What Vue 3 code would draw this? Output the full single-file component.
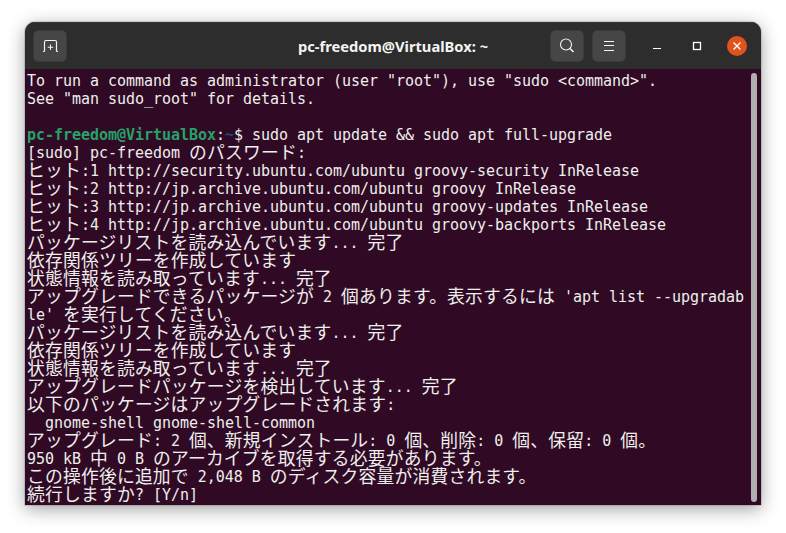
<script setup>
const plain = [
  'To run a command as administrator (user "root"), use "sudo <command>".',
  'See "man sudo_root" for details.',
  '',
  null,
  '[sudo] pc-freedom のパスワード:',
  'ヒット:1 http://security.ubuntu.com/ubuntu groovy-security InRelease',
  'ヒット:2 http://jp.archive.ubuntu.com/ubuntu groovy InRelease',
  'ヒット:3 http://jp.archive.ubuntu.com/ubuntu groovy-updates InRelease',
  'ヒット:4 http://jp.archive.ubuntu.com/ubuntu groovy-backports InRelease',
  'パッケージリストを読み込んでいます... 完了',
  '依存関係ツリーを作成しています',
  '状態情報を読み取っています... 完了',
  "アップグレードできるパッケージが 2 個あります。表示するには 'apt list --upgradab",
  "le' を実行してください。",
  'パッケージリストを読み込んでいます... 完了',
  '依存関係ツリーを作成しています',
  '状態情報を読み取っています... 完了',
  'アップグレードパッケージを検出しています... 完了',
  '以下のパッケージはアップグレードされます:',
  '  gnome-shell gnome-shell-common',
  'アップグレード: 2 個、新規インストール: 0 個、削除: 0 個、保留: 0 個。',
  '950 kB 中 0 B のアーカイブを取得する必要があります。',
  'この操作後に追加で 2,048 B のディスク容量が消費されます。',
  '続行しますか? [Y/n]'
]

const prompt = [
  { text: 'pc-freedom@VirtualBox', cls: 'green' },
  { text: ':', cls: '' },
  { text: '~', cls: 'blue' },
  { text: '$ sudo apt update && sudo apt full-upgrade', cls: '' }
]

function runs(line) {
  return line
    .split(/([\u3000-\u9fff\uff00-\uffef]+)/)
    .filter(Boolean)
    .map((text) => ({ text, cls: /^[\u3000-\u9fff\uff00-\uffef]/.test(text) ? 'cjk' : '' }))
}

const lines = plain.map((line) => (line === null ? prompt : runs(line)))
</script>

<template>
  <div class="page">
    <div class="window">
      <header class="bar">
        <div class="side">
          <button class="btn first">
            <svg width="16" height="16" viewBox="0 0 16 16" fill="none" stroke="#f4f4f2" stroke-width="1.2">
              <path d="M2.5 13.5V4q0-1.500 1.500-1.500h9q1.500 0 1.500 1.500V13.500M1 13.500h1.500M14.500 13.500H16" />
              <path d="M8.500 6.500v5.500M5.750 9.250h5.500" stroke-width="1" />
            </svg>
          </button>
        </div>
        <div class="title">pc-freedom@VirtualBox: ~</div>
        <div class="side end">
          <div class="actions">
            <button class="btn">
              <svg width="16" height="16" viewBox="0 0 16 16" fill="none" stroke="#f4f4f2">
                <circle cx="7" cy="6.500" r="5.500" stroke-width="1.100" />
                <path d="M11 10.500l3.500 3.500" stroke-width="1.600" />
              </svg>
            </button>
            <button class="btn">
              <svg width="16" height="16" viewBox="0 0 16 16" fill="none" stroke="#f4f4f2" stroke-width="1">
                <path d="M3 3.500h10M3 7.500h10M3 12.500h10" />
              </svg>
            </button>
          </div>
          <div class="controls">
            <span class="ctl">
              <svg width="16" height="16" viewBox="0 0 16 16" fill="none" stroke="#fff" stroke-width="1"><path d="M4 10.500h8" /></svg>
            </span>
            <span class="ctl">
              <svg width="16" height="16" viewBox="0 0 16 16" fill="none" stroke="#fff" stroke-width="1.300"><rect x="4.500" y="4.500" width="7" height="7" /></svg>
            </span>
            <span class="ctl close">
              <svg width="16" height="16" viewBox="0 0 16 16" fill="none" stroke="#fff" stroke-width="1.400"><path d="M4.500 4.500l7 7M11.500 4.500l-7 7" /></svg>
            </span>
          </div>
        </div>
      </header>
      <main class="term">
        <div class="output">
          <div v-for="(line, i) in lines" :key="i" class="line">
            <span v-for="(run, j) in line" :key="j" :class="run.cls">{{ run.text }}</span>
          </div>
        </div>
        <div class="scroll"><div class="thumb"></div></div>
      </main>
    </div>
  </div>
</template>

<style scoped>
.page {
  width: 786px;
  height: 533px;
  padding: 22px 25px 0;
  box-sizing: border-box;
  background: #fff;
}
.window {
  width: 736px;
  height: 483px;
  display: flex;
  flex-direction: column;
  border-radius: 10px 10px 0 0;
  background: #2d2d2d;
  box-shadow: 0 4px 18px rgba(0, 0, 0, 0.38), 0 0 0 1px rgba(0, 0, 0, 0.12);
  overflow: hidden;
}
.bar {
  height: 47px;
  flex: none;
  display: grid;
  grid-template-columns: 1fr auto 1fr;
  align-items: center;
  padding: 0 14px 1px;
  background: #2d2d2d;
  box-sizing: border-box;
  border-top: 1px solid #3a3a3a;
}
.side {
  display: flex;
  align-items: center;
}
.end {
  justify-content: flex-end;
}
.btn {
  width: 34px;
  height: 32px;
  flex: none;
  display: flex;
  align-items: center;
  justify-content: center;
  padding: 0;
  border: 1px solid #3a3a3a;
  border-radius: 5px;
  background: #464646;
}
.first {
  margin-left: -6px;
}
.title {
  color: #f4f4f2;
  font: bold 14.7px/18px "Noto Sans", sans-serif;
}
.actions {
  display: flex;
  gap: 8px;
  margin-right: 21px;
}
.controls {
  display: flex;
  align-items: center;
  gap: 20px;
}
.ctl {
  width: 20px;
  height: 20px;
  display: flex;
  align-items: center;
  justify-content: center;
}
.close {
  border-radius: 50%;
  background: #e2521d;
}
.term {
  flex: 1;
  min-height: 0;
  display: flex;
  background: #300a24;
  padding: 3px 1px 0 2px;
}
.output {
  flex: 1;
  min-width: 0;
  color: #eeeeec;
  font: 15px/18px "DejaVu Sans Mono", monospace;
  letter-spacing: -0.03px;
}
.line {
  height: 18px;
  display: flex;
  white-space: pre;
}
.cjk {
  font: 17.8px/14px "Noto Sans CJK JP", sans-serif;
  letter-spacing: 0.2px;
}
.green {
  color: #26a269;
  font-weight: bold;
}
.blue {
  color: #12488b;
  font-weight: bold;
}
.scroll {
  width: 10px;
  flex: none;
  padding: 1px 3px 3px 1px;
  box-sizing: border-box;
}
.thumb {
  width: 6px;
  height: 100%;
  border-radius: 3px;
  background: #b0aeae;
}
</style>
